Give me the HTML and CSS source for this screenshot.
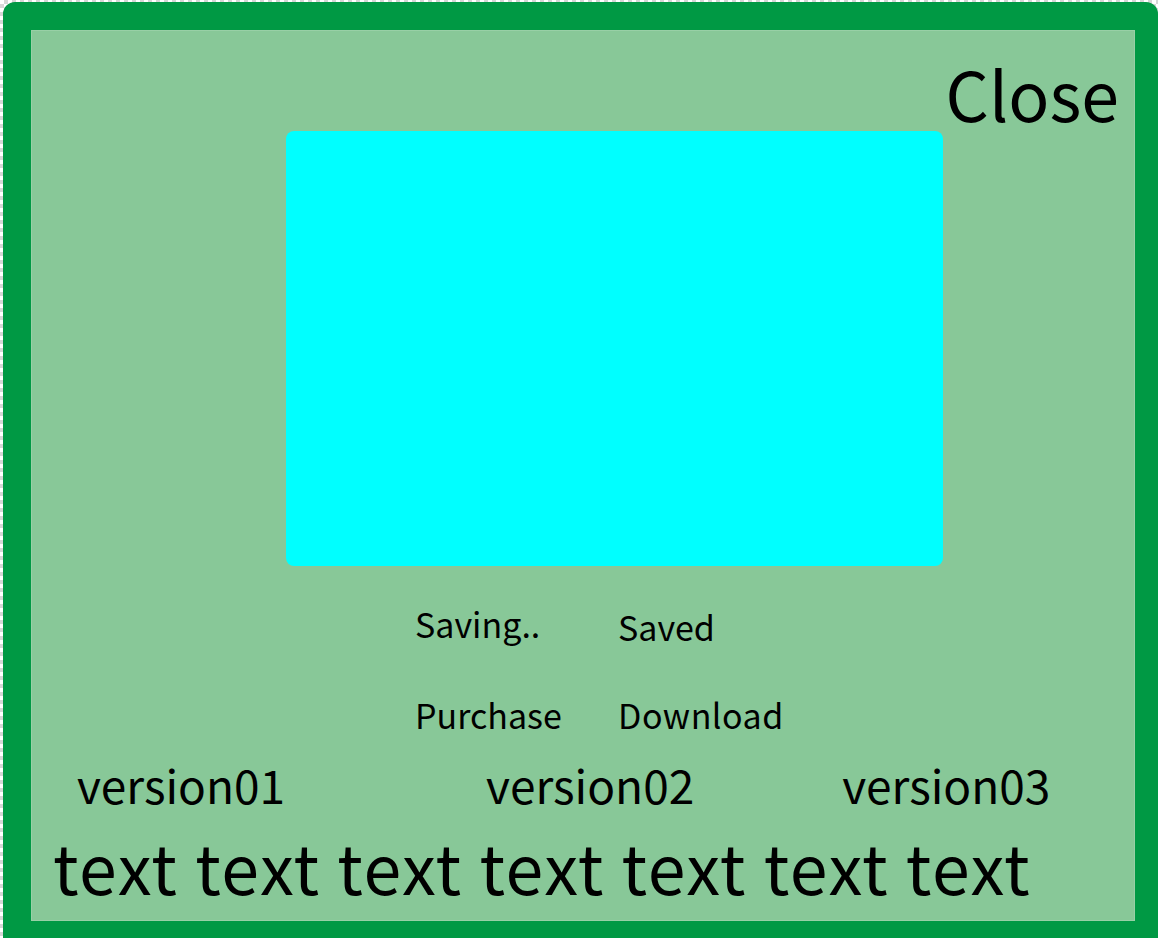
FILE: index.html
```html
<!DOCTYPE html>
<html>
<head>
<meta charset="utf-8">
<link rel="stylesheet" href="styles.css">
</head>
<body>
<div class="frame">
  <div class="panel">
    <div class="top-row"><span class="close">Close</span></div>
    <div class="preview"></div>
    <div class="status-grid">
      <span class="status saving">Saving..</span>
      <span class="status saved">Saved</span>
      <span class="status">Purchase</span>
      <span class="status download">Download</span>
    </div>
    <div class="versions">
      <span class="version v1">version01</span>
      <span class="version v2">version02</span>
      <span class="version v3">version03</span>
    </div>
    <div class="body-text">text text text text text text text</div>
  </div>
</div>
</body>
</html>
```

FILE: styles.css
```css
html, body {
  margin: 0;
  padding: 0;
  height: 100%;
  overflow: hidden;
}
body {
  background-color: #ffffff;
  background-image: conic-gradient(#d6d6d6 25%, #ffffff 0 50%, #d6d6d6 0 75%, #ffffff 0);
  background-size: 8px 8px;
  font-family: "Noto Sans CJK JP", "Noto Sans", sans-serif;
  color: #000;
}
.frame {
  box-sizing: border-box;
  margin: 2px 0 0 3px;
  height: 936px;
  background: #009944;
  border-radius: 12px 12px 0 0;
  padding: 28px 23px 17px 28px;
}
.panel {
  box-sizing: border-box;
  height: 100%;
  background: #88c898;
  border: 1px solid #98d0a6;
  display: flex;
  flex-direction: column;
}
.top-row {
  display: flex;
  justify-content: flex-end;
  padding-right: 15px;
  height: 100px;
}
.close {
  font-size: 68px;
  line-height: 1;
  margin-top: 28px;
}
.preview {
  width: 657px;
  height: 435px;
  margin-left: 254px;
  background: #00ffff;
  border-radius: 8px;
}
.status-grid {
  display: grid;
  grid-template-columns: 203px auto;
  margin-left: 383px;
  margin-top: 34px;
  row-gap: 40px;
}
.status {
  font-size: 34px;
  line-height: 48px;
}
.saved {
  padding-top: 3px;
}
.download {
  letter-spacing: 0.5px;
}
.versions {
  display: flex;
  margin-top: 17px;
  padding-left: 45px;
}
.version {
  font-size: 46px;
  line-height: 56px;
}
.v2 { margin-left: 201px; }
.v3 { margin-left: 148px; }
.body-text {
  font-size: 68px;
  line-height: 80px;
  padding-left: 21px;
  margin-top: 14px;
  letter-spacing: 1.5px;
  white-space: nowrap;
}
```
